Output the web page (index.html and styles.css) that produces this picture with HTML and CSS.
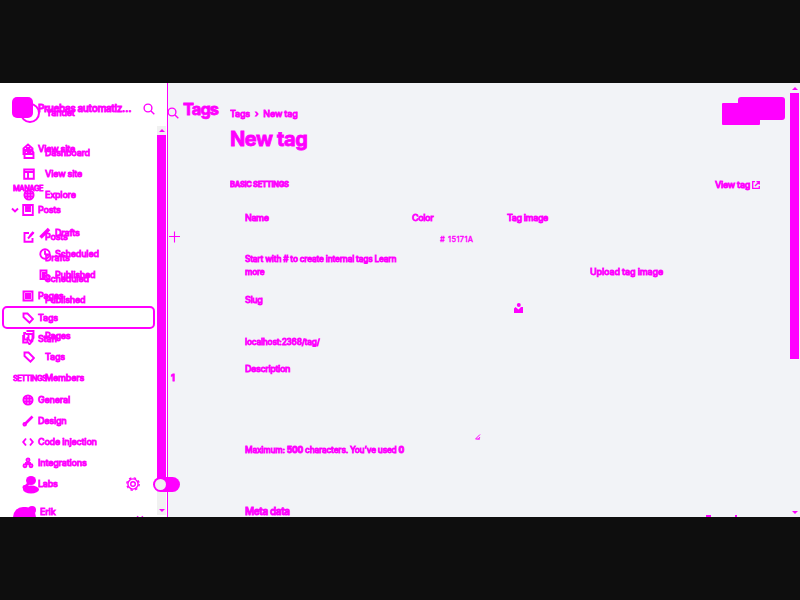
FILE: index.html
```html
<!DOCTYPE html>
<html lang="en">
<head>
<meta charset="utf-8">
<title>New tag</title>
<link rel="stylesheet" href="styles.css">
</head>
<body>
<svg class="defs">
  <symbol id="search" viewBox="0 0 12 12"><circle cx="5" cy="5" r="3.9"/><path d="M8 8l3.3 3.3"/></symbol>
  <symbol id="house" viewBox="0 0 12 12"><path d="M1.5 5.5L6 1.5l4.500 4v5.500h-9zM1 7h10M4 5h4"/></symbol>
  <symbol id="site" viewBox="0 0 12 12"><path d="M1.200 1.500h9.600v9.300H1.200zM1 4h10M5 4v7"/></symbol>
  <symbol id="globe" viewBox="0 0 12 12"><circle cx="6" cy="6" r="4.600"/><path d="M1 4.500h10M1 7.500h10M4.500 1.500v9M7.500 1.500v9"/></symbol>
  <symbol id="posts" viewBox="0 0 12 12"><path d="M1.200 1h9.600v10H1.200zM4 2v5h4V2M6 1v6M4 4h4"/></symbol>
  <symbol id="edit" viewBox="0 0 12 12"><path d="M6 2H1.500v8.700h8V7M5 7.500l5.500-6" /><path d="M7 5l3.500-4" stroke-width="2.500"/></symbol>
  <symbol id="pen" viewBox="0 0 12 12"><path d="M1.500 10.500L10 2" stroke-width="3.500"/></symbol>
  <symbol id="clock" viewBox="0 0 12 12"><circle cx="6" cy="6" r="4.700"/><path d="M6 2.500V6l3 2"/></symbol>
  <symbol id="published" viewBox="0 0 12 12"><path d="M6 10H1.500V1.500h6V5M3 4h4M3 6h3M3 8h2"/><circle cx="8" cy="8.500" r="2.500"/></symbol>
  <symbol id="pages" viewBox="0 0 12 12"><path d="M1.500 1.500h9v9h-9zM3 4h6M3 6h6M3 8h6M4.500 3v6"/></symbol>
  <symbol id="tag" viewBox="0 0 12 12"><path d="M1.500 1.500H5.500L11 7 7.500 10.700 1.500 5z"/></symbol>
  <symbol id="stack" viewBox="0 0 12 12"><path d="M3.500 1h7v7l-3 3.300-2-2.300V4M3 3H1.200v6.500H5"/></symbol>
  <symbol id="cog" viewBox="0 0 14 14"><circle cx="7" cy="7" r="5.100"/><circle cx="7" cy="7" r="2.300"/><circle cx="7" cy="7" r="6.200" stroke-dasharray="2.400 2.470"/></symbol>
  <symbol id="brush" viewBox="0 0 12 12"><path d="M2.500 9.500l3-3L10.500 1.500" stroke-width="2.600"/><circle cx="2.700" cy="9.300" r="1.300"/></symbol>
  <symbol id="code" viewBox="0 0 12 12"><path d="M4 2.500L1.200 6 4 9.500M8 2.500L10.800 6 8 9.500"/></symbol>
  <symbol id="nodes" viewBox="0 0 12 12"><circle cx="6" cy="3" r="1.500"/><circle cx="3" cy="8.700" r="1.500"/><circle cx="9" cy="8.700" r="1.500"/><path d="M6 4v4M4 5v3M8 5v3"/></symbol>
  <symbol id="down" viewBox="0 0 8 8"><path d="M1 2.500l3 3 3-3"/></symbol>
  <symbol id="plus" viewBox="0 0 12 12"><path d="M5.500 .5v11M0 5.500h11" stroke-width="1.100"/></symbol>
  <symbol id="external" viewBox="0 0 8 8"><path d="M3 .7H.7v6.600h6.600V5M4.500.7h2.800v2.800M3 5l4-4"/></symbol>
</svg>

<div class="stage">
  <aside class="sidebar">
    <nav class="layer front">
      <div class="row brand"><span class="logo"></span><span class="label">Pruebas automatiz…</span></div>
      <div class="row gap-view"><svg class="ic"><use href="#house"/></svg><span class="label">View site</span></div>
      <div class="row gap-19 heading"><span>MANAGE</span></div>
      <div class="row"><svg class="chev"><use href="#down"/></svg><svg class="ic near"><use href="#posts"/></svg><span class="label">Posts</span></div>
      <div class="row sub gap-2"><svg class="ic"><use href="#pen"/></svg><span class="label">Drafts</span></div>
      <div class="row sub"><svg class="ic"><use href="#clock"/></svg><span class="label">Scheduled</span></div>
      <div class="row sub"><svg class="ic"><use href="#published"/></svg><span class="label">Published</span></div>
      <div class="row"><svg class="ic"><use href="#pages"/></svg><span class="label">Pages</span></div>
      <div class="row active"><svg class="ic"><use href="#tag"/></svg><span class="label">Tags</span></div>
      <div class="row"><svg class="ic"><use href="#stack"/></svg><span class="label">Staff</span></div>
      <div class="row gap-19 heading"><span>SETTINGS</span></div>
      <div class="row"><svg class="ic"><use href="#globe"/></svg><span class="label">General</span></div>
      <div class="row"><svg class="ic"><use href="#brush"/></svg><span class="label">Design</span></div>
      <div class="row"><svg class="ic"><use href="#code"/></svg><span class="label">Code injection</span></div>
      <div class="row"><svg class="ic"><use href="#nodes"/></svg><span class="label">Integrations</span></div>
      <div class="row"><svg class="ic"><use href="#brush"/></svg><span class="label">Labs</span></div>
      <div class="row user"><span class="avatar"><span class="dot"></span></span><span class="label">Erik</span><svg class="chev end"><use href="#down"/></svg></div>
    </nav>
    <nav class="layer back">
      <div class="row site"><span class="ring"></span><span class="label">Yandet</span></div>
      <div class="row gap-20"><svg class="ic"><use href="#house"/></svg><span class="label">Dashboard</span></div>
      <div class="row"><svg class="ic"><use href="#site"/></svg><span class="label">View site</span></div>
      <div class="row"><svg class="ic"><use href="#globe"/></svg><span class="label">Explore</span></div>
      <div class="row gap-21"><svg class="ic"><use href="#edit"/></svg><span class="label">Posts</span></div>
      <div class="row inner"><span class="label">Drafts</span></div>
      <div class="row inner"><span class="label">Scheduled</span></div>
      <div class="row inner"><span class="label">Published</span></div>
      <div class="row gap-14"><svg class="ic"><use href="#stack"/></svg><span class="label">Pages</span></div>
      <div class="row"><svg class="ic"><use href="#tag"/></svg><span class="label">Tags</span></div>
      <div class="row members"><span class="label">Members</span></div>
      <div class="foot"><svg class="person" viewBox="0 0 16 18"><ellipse cx="8" cy="4.500" rx="5" ry="4.500"/><ellipse cx="8" cy="13.500" rx="8" ry="4"/></svg><svg class="gear"><use href="#cog"/></svg></div>
    </nav>
    <svg class="find"><use href="#search"/></svg>
    <div class="scroll side-scroll"><i class="up"></i><b></b><i class="dn"></i></div>
  </aside>
  <div class="toggle"><span></span></div>

  <main class="main">
    <div class="rail">
      <svg class="rail-search"><use href="#search"/></svg>
      <svg class="rail-plus"><use href="#plus"/></svg>
      <span class="count">1</span>
    </div>
    <h2 class="list-title">Tags</h2>
    <section class="content">
      <header class="head">
        <div>
          <div class="crumbs"><span>Tags</span><span>›</span><span>New tag</span></div>
          <h1>New tag</h1>
        </div>
        <div class="buttons"><span class="btn old"></span><span class="btn new"></span></div>
      </header>
      <div class="section-head"><h4>BASIC SETTINGS</h4><a>View tag <svg><use href="#external"/></svg></a></div>
      <div class="form">
        <div class="col fields">
          <label class="f-name">Name</label>
          <p class="hint">Start with # to create internal tags Learn<br>more</p>
          <label class="f-slug">Slug</label>
          <p class="url">localhost:2368/tag/</p>
          <label class="f-desc">Description</label>
          <div class="grip"><svg viewBox="0 0 6 6"><path d="M0 5.500L5 .5M3 5.500L5 3M1 5h4"/></svg></div>
          <p class="max">Maximum: <b>500</b> characters. You’ve used <b>0</b></p>
          <h3>Meta data</h3>
        </div>
        <div class="col color"><label>Color</label><div class="hex"><span>#</span><span>15171A</span></div></div>
        <div class="col image"><label>Tag image</label>
          <div class="upload">Upload tag image</div>
          <svg class="upload-icon" viewBox="0 0 9 10"><circle cx="4.800" cy="2" r="2"/><path d="M0 5.500l1.500-1.500L4.500 6.500 7 4h2v6H0z"/></svg>
        </div>
      </div>
      <div class="cut"><i></i><i></i></div>
    </section>
    <div class="scroll main-scroll"><i class="up"></i><b></b><i class="dn"></i></div>
  </main>
</div>
</body>
</html>
```
FILE: styles.css
```css
* { box-sizing: border-box; }
:root { --ink: #ff00ff; }
body {
  margin: 0; height: 600px; overflow: hidden; background: #0e0e0e; padding: 83px 0;
  font: 500 9px/12px Inter, "Liberation Sans", sans-serif; color: var(--ink);
  -webkit-text-stroke: .8px var(--ink);
}
h1, h2, h3, h4, p { margin: 0; font-weight: 700; }
svg { display: block; flex: none; fill: none; stroke: var(--ink); stroke-width: 1.9; }
.defs { position: absolute; width: 0; height: 0; }
.stage { position: relative; display: flex; width: 800px; height: 434px; overflow: hidden; background: #f2f3f7; }

.sidebar { display: grid; grid-template-columns: 157px 10px; width: 168px; height: 434px; background: #fff; border-right: 1px solid var(--ink); flex: none; letter-spacing: -.22px; }
.layer { grid-area: 1 / 1; width: 157px; height: 434px; overflow: hidden; }
.row { display: flex; align-items: center; height: 21px; white-space: nowrap; }
.ic { width: 12px; height: 12px; }

.front .row { padding-left: 22px; }
.front .ic { margin-right: 4px; }
.front .brand { margin-top: 14px; padding-left: 12px; }
.logo { width: 21px; height: 21px; border-radius: 5px; background: var(--ink); margin-right: 5px; }
.brand .label { font-weight: 600; font-size: 10px; letter-spacing: -.38px; }
.front .gap-view { margin-top: 20px; }
.gap-19 { margin-top: 19px; }
.gap-2 { margin-top: 2px; }
.front .heading { padding-left: 13px; font-size: 7.500px; letter-spacing: -.5px; }
.chev { width: 8px; height: 8px; }
.front .chev:not(.end) { margin: 0 3px 0 -11px; }
.front .sub { padding-left: 39px; }
.front .row.active { width: 153px; margin-left: 2px; padding-left: 18px; height: 23px; border: 2px solid var(--ink); border-radius: 5px; margin-bottom: -1px; }
.front .user { margin-top: 7px; padding-left: 13px; }
.avatar { position: relative; width: 23px; height: 20px; margin-top: 10px; border-radius: 10px; background: var(--ink); margin-right: 4px; }
.dot { position: absolute; right: 0; top: -1px; width: 8px; height: 8px; border-radius: 50%; background: var(--ink); }
.front .end { margin-left: auto; margin-right: 13px; margin-top: 12px; }

.back .row { padding-left: 23px; }
.back .ic { margin-right: 10px; }
.back .site { margin-top: 19px; padding-left: 20px; }
.ring { width: 20px; height: 20px; border: 2.500px solid var(--ink); border-radius: 50%; margin-right: 6px; }
.gap-20 { margin-top: 19px; }
.gap-21 { margin-top: 21px; }
.gap-14 { margin-top: 15px; }
.back .inner, .back .members { padding-left: 45px; }
.foot { display: flex; align-items: center; margin-top: 88px; padding-left: 23px; }
.person { width: 16px; height: 18px; fill: var(--ink); stroke: none; }
.gear { width: 14px; height: 14px; margin: -3px 0 0 87px; stroke-width: 1.400; }
.find { position: absolute; left: 143px; top: 20px; width: 12px; height: 12px; stroke-width: 1.400; }

.scroll { display: flex; flex-direction: column; align-items: center; }
.scroll b { width: 9px; background: var(--ink); }
.scroll i { border: 3px solid transparent; height: 0; width: 0; }
.scroll .up { border-bottom-color: var(--ink); border-top: 0; }
.scroll .dn { border-top-color: var(--ink); border-bottom: 0; margin-top: auto; }
.side-scroll { grid-area: 1 / 2; width: 9px; height: 389px; margin-top: 43px; padding: 3px 0; background: #f1f1f1; }
.side-scroll b { height: 344px; margin-top: 3px; }
.toggle { position: absolute; left: 153px; top: 394px; width: 27px; height: 15px; border-radius: 8px; background: var(--ink); padding: 2px; }
.toggle span { display: block; width: 11px; height: 11px; border-radius: 50%; background: #f1f1f1; }

.main { display: flex; width: 632px; height: 434px; }
.rail { width: 15px; flex: none; padding-top: 24px; }
.rail-search { width: 12px; height: 12px; margin-left: -1px; stroke-width: 1.400; }
.rail-plus { width: 12px; height: 12px; margin: 112px 0 0 1px; }
.count { display: block; margin: 129px 0 0 3px; font-weight: 700; }
.list-title { width: 47px; flex: none; font-size: 16.500px; line-height: 20px; margin-top: 16px; letter-spacing: -1px; }
.content { width: 559px; height: 434px; overflow: hidden; flex: none; }
.head { display: flex; justify-content: space-between; height: 90px; padding-right: 4px; }
.crumbs { display: flex; gap: 5px; margin-top: 25px; letter-spacing: -.2px; }
h1 { font-size: 20px; line-height: 24px; margin-top: 7px; letter-spacing: -.4px; }
.buttons { display: grid; width: 63px; height: 28px; margin-top: 14px; }
.btn { grid-area: 1 / 1; background: var(--ink); }
.btn.old { width: 38px; height: 22px; margin-top: 6px; border-radius: 1px; }
.btn.new { width: 47px; height: 23px; margin-left: 16px; border-radius: 3px; }
.section-head { display: flex; justify-content: space-between; height: 24px; padding: 5px 29px 0 0; }
h4 { font-size: 7.500px; line-height: 13px; letter-spacing: -.28px; }
.section-head a { display: flex; align-items: center; gap: 2px; height: 14px; letter-spacing: -.3px; }
.section-head svg { width: 8px; height: 8px; stroke-width: 1.300; }
.form { display: flex; height: 315px; padding-left: 15px; white-space: nowrap; letter-spacing: -.4px; }
label, .fields p, .fields h3 { display: block; height: 12px; line-height: 12px; font-weight: 500; }
.fields { width: 167px; padding-top: 15px; }
.fields p { font-size: 8.300px; letter-spacing: -.19px; }
.fields .hint { height: 26px; line-height: 13px; margin-top: 29px; }
.fields .f-slug { margin-top: 15px; }
.fields .url { margin-top: 30px; }
.fields .f-desc { margin-top: 15px; }
.grip { display: flex; width: 236px; height: 65px; justify-content: flex-end; align-items: flex-end; }
.grip svg { width: 6px; height: 6px; stroke-width: 1; }
.fields .max { margin-top: 4px; }
.max b { font-weight: 800; }
.fields h3 { font-size: 10px; font-weight: 600; margin-top: 49px; }
.color { width: 95px; padding-top: 15px; }
.hex { display: flex; gap: 3px; margin: 10px 0 0 28px; font-size: 7.500px; letter-spacing: .3px; -webkit-text-stroke-width: .3px; }
.image { padding-top: 15px; }
.upload { margin: 42px 0 0 83px; letter-spacing: -.15px; }
.upload-icon { width: 9px; height: 10px; margin: 25px 0 0 7px; fill: var(--ink); stroke: none; }
.cut { display: flex; justify-content: flex-end; gap: 24px; padding-right: 52px; margin-top: 3px; }
.cut i { width: 2px; height: 2px; background: var(--ink); }
.cut i:first-child { width: 5px; }
.main-scroll { width: 9px; height: 434px; margin-left: 1px; padding: 4px 0 3px; flex: none; }
.main-scroll b { height: 266px; margin-top: 3px; }
```
